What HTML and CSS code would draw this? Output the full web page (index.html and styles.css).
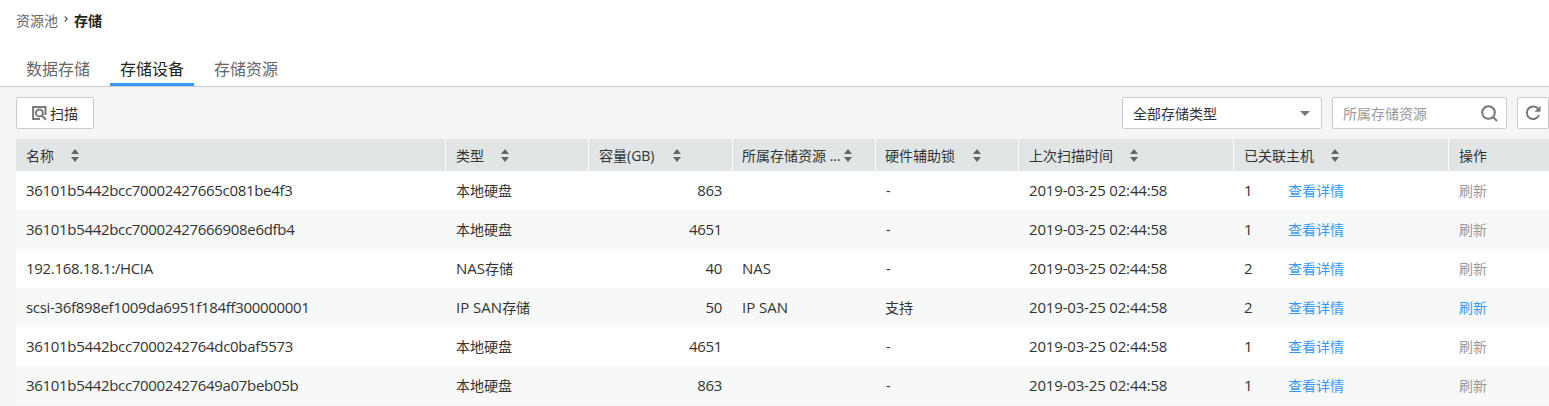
FILE: index.html
```html
<!DOCTYPE html>
<html lang="zh-CN">
<head>
<meta charset="utf-8">
<title>存储设备</title>
<link rel="stylesheet" href="styles.css">
</head>
<body>
<svg class="defs" aria-hidden="true">
  <symbol id="sort" viewBox="0 0 8 13"><path d="M0 5 4 0l4 5zM0 8h8l-4 5z"/></symbol>
</svg>
<header class="top">
  <nav class="crumbs"><a>资源池</a><svg class="sep" viewBox="0 0 4 6"><path d="M.7.5 3.2 3 .7 5.5"/></svg><strong>存储</strong></nav>
  <nav class="tabs"><a class="tab">数据存储</a><a class="tab active">存储设备</a><a class="tab">存储资源</a></nav>
</header>
<main class="panel">
  <div class="toolbar">
    <button class="box scan"><svg class="scan-icon" viewBox="0 0 15 15"><path d="M8 13.100H1.100V1.100h12.400V9"/><circle cx="7.400" cy="6.900" r="3.500"/><path d="m9.800 9.500 4.200 4.300"/></svg><span>扫描</span></button>
    <div class="filters">
      <div class="box select"><span>全部存储类型</span><svg class="caret" viewBox="0 0 10 5"><path d="M0 0h10L5 5z"/></svg></div>
      <div class="box search"><span>所属存储资源</span><svg class="search-icon" viewBox="0 0 17 17"><circle cx="7.500" cy="7.500" r="6.300"/><path d="m12 12 4 4"/></svg></div>
      <button class="box reload"><svg class="reload-icon" viewBox="0 0 16 16"><path d="M13.200 4A6.300 6.300 0 1 0 14 10"/><path class="head" d="M15.500.8v6H9.500z"/></svg></button>
    </div>
  </div>
  <div class="grid">
    <div class="row head-row">
      <div><span>名称</span><svg class="sort"><use href="#sort"/></svg></div>
      <div><span>类型</span><svg class="sort"><use href="#sort"/></svg></div>
      <div><span class="cap">容量(GB)</span><svg class="sort"><use href="#sort"/></svg></div>
      <div><span class="cut">所属存储资源 ...</span><svg class="sort tight"><use href="#sort"/></svg></div>
      <div><span>硬件辅助锁</span><svg class="sort"><use href="#sort"/></svg></div>
      <div><span>上次扫描时间</span><svg class="sort"><use href="#sort"/></svg></div>
      <div><span>已关联主机</span><svg class="sort"><use href="#sort"/></svg></div>
      <div><span>操作</span></div>
    </div>
    <div class="row"><div class="name">36101b5442bcc70002427665c081be4f3</div><div>本地硬盘</div><div class="num">863</div><div></div><div class="none">-</div><div class="time">2019-03-25 02:44:58</div><div><span class="count">1</span><a class="link">查看详情</a></div><div class="off">刷新</div></div>
    <div class="row"><div class="name">36101b5442bcc70002427666908e6dfb4</div><div>本地硬盘</div><div class="num">4651</div><div></div><div class="none">-</div><div class="time">2019-03-25 02:44:58</div><div><span class="count">1</span><a class="link">查看详情</a></div><div class="off">刷新</div></div>
    <div class="row"><div class="name">192.168.18.1:/HCIA</div><div><span class="lat">NAS</span>存储</div><div class="num">40</div><div><span class="lat">NAS</span></div><div class="none">-</div><div class="time">2019-03-25 02:44:58</div><div><span class="count">2</span><a class="link">查看详情</a></div><div class="off">刷新</div></div>
    <div class="row"><div class="name">scsi-36f898ef1009da6951f184ff300000001</div><div><span class="lat">IP SAN</span>存储</div><div class="num">50</div><div><span class="lat">IP SAN</span></div><div>支持</div><div class="time">2019-03-25 02:44:58</div><div><span class="count">2</span><a class="link">查看详情</a></div><div class="link">刷新</div></div>
    <div class="row"><div class="name">36101b5442bcc7000242764dc0baf5573</div><div>本地硬盘</div><div class="num">4651</div><div></div><div class="none">-</div><div class="time">2019-03-25 02:44:58</div><div><span class="count">1</span><a class="link">查看详情</a></div><div class="off">刷新</div></div>
    <div class="row"><div class="name">36101b5442bcc70002427649a07beb05b</div><div>本地硬盘</div><div class="num">863</div><div></div><div class="none">-</div><div class="time">2019-03-25 02:44:58</div><div><span class="count">1</span><a class="link">查看详情</a></div><div class="off">刷新</div></div>
  </div>
</main>
</body>
</html>
```
FILE: styles.css
```css
* { box-sizing: border-box; }
body {
  margin: 0;
  height: 406px;
  overflow: hidden;
  background: #fff;
  color: #333;
  font: 14px/20px "Open Sans", "Noto Sans CJK SC", sans-serif;
}
.defs { display: none; }
svg { flex: none; fill: none; stroke: #777; }
.top { height: 87px; border-bottom: 1px solid #ccc; display: flex; flex-direction: column; justify-content: space-between; }
.crumbs { display: flex; align-items: center; padding: 11px 0 0 16px; color: #666; }
.crumbs strong { color: #222; }
.sep { width: 4px; height: 6px; margin: 0 6px 4px; stroke: #555; stroke-width: 1.2; }
.tabs { display: flex; padding-left: 16px; gap: 10px; }
.tab { width: 84px; height: 35px; border-bottom: 3px solid transparent; text-align: center; font-size: 16px; line-height: 36px; color: #666; }
.tab.active { color: #222; border-color: #3399ff; }
.panel { background: #f4f5f7; padding: 10px 0 0 16px; height: 319px; }
.toolbar { display: flex; justify-content: space-between; }
.box { display: flex; align-items: center; height: 32px; border: 1px solid #ccc; border-radius: 2px; background: #fff; color: #333; font: inherit; line-height: 30px; padding: 0 10px; }
.box span { padding-top: 1px; }
.scan { width: 78px; padding: 0 0 0 15px; gap: 3px; }
.scan-icon { width: 15px; height: 15px; stroke-width: 2; }
.filters { display: flex; gap: 10px; }
.select { width: 200px; justify-content: space-between; padding-right: 11px; }
.caret { width: 10px; height: 5px; fill: #777; stroke: none; }
.search { width: 175px; justify-content: space-between; color: #999; padding-right: 8px; }
.search-icon { width: 17px; height: 17px; stroke-width: 2; }
.reload { width: 32px; padding: 0 0 0 7px; }
.reload-icon { width: 16px; height: 16px; stroke-width: 2; }
.reload-icon .head { fill: #777; stroke: none; }
.grid { margin-top: 10px; }
.row { display: grid; grid-template-columns: 430px 143px 144px 143px 143px 215px 215px 100px; height: 39px; background: #fff; }
.row:nth-child(odd) { background: #f7f9f8; }
.row > div { display: flex; align-items: center; padding: 0 10px; white-space: nowrap; }
.row > div:nth-child(4), .row > div:nth-child(5) { padding-left: 9px; }
.row > div.none:nth-child(5) { padding-left: 10px; }
.row.head-row { height: 32px; background: #e1e5e5; }
.head-row > div { border-right: 1px solid #fff; }
.head-row > div:last-child { border-right: 0; }
.head-row span { padding-top: 2px; }
.row > .num { justify-content: flex-end; padding-right: 11px; }
.sort { width: 8px; height: 13px; margin: 1px 0 0 17px; fill: #666; stroke: none; }
.row > div:nth-child(5) .sort { margin-left: 18px; }
.row .sort.tight { margin-left: 1px; }
.cap { width: 57px; }
.cut { width: 101px; }
.name, .num, .time, .lat, .count { font-size: 15px; letter-spacing: -.32px; }
.row > .name, .row > .num, .row > .time, .lat, .count { padding-bottom: 2px; }
.time { letter-spacing: -.17px; }
.lat { letter-spacing: 0; }
.count { width: 44px; }
.link { color: #3399ff; }
.off { color: #999; }
```
